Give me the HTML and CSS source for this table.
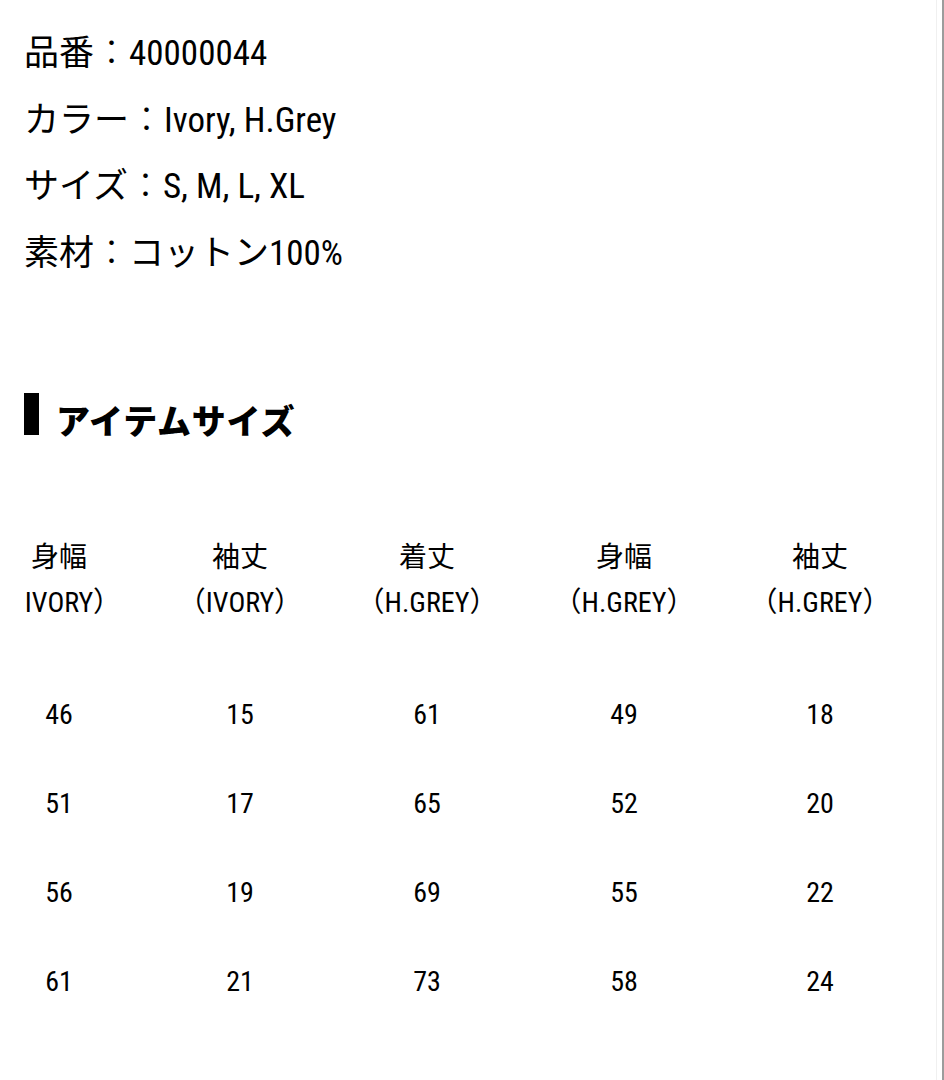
FILE: index.html
```html
<!DOCTYPE html>
<html lang="ja">
<head>
<meta charset="utf-8">
<title>アイテムサイズ</title>
<link rel="stylesheet" href="styles.css">
</head>
<body>
<div class="page">
  <div class="info">
    <p>品番<span class="sep">：</span>40000044</p>
    <p>カラー<span class="sep">：</span>Ivory, H.Grey</p>
    <p>サイズ<span class="sep">：</span>S, M, L, XL</p>
    <p>素材<span class="sep">：</span>コットン100%</p>
  </div>
  <h2 class="heading"><span class="heading-text">アイテムサイズ</span></h2>
  <div class="table-scroll">
    <table class="size-table">
      <colgroup>
        <col class="c1"><col class="c2"><col class="c3"><col class="c4"><col class="c5">
      </colgroup>
      <thead>
        <tr>
          <th>身幅<br>（IVORY）</th>
          <th>袖丈<br>（IVORY）</th>
          <th>着丈<br>（H.GREY）</th>
          <th>身幅<br>（H.GREY）</th>
          <th>袖丈<br>（H.GREY）</th>
        </tr>
      </thead>
      <tbody>
        <tr><td>46</td><td>15</td><td>61</td><td>49</td><td>18</td></tr>
        <tr><td>51</td><td>17</td><td>65</td><td>52</td><td>20</td></tr>
        <tr><td>56</td><td>19</td><td>69</td><td>55</td><td>22</td></tr>
        <tr><td>61</td><td>21</td><td>73</td><td>58</td><td>24</td></tr>
      </tbody>
    </table>
  </div>
</div>
<div class="edge"></div>
</body>
</html>
```

FILE: styles.css
```css
html, body {
  margin: 0;
  padding: 0;
  background: #fff;
}

body {
  display: flex;
  min-height: 1080px;
  color: #000;
  font-family: "Roboto Condensed", "Roboto", "Noto Sans CJK JP", sans-serif;
  font-stretch: 87.5%;
}

.page {
  flex: 1;
  min-width: 0;
  box-sizing: border-box;
  padding: 21px 24px 0;
}

.edge {
  width: 8px;
  box-sizing: border-box;
  border-left: 1px solid #f0f0f0;
  border-right: 2px solid #9c9c9c;
}

.info p {
  margin: 0;
  font-size: 35px;
  line-height: 66.5px;
}

.sep {
  font-weight: 300;
  line-height: 0;
}

.heading {
  margin: 106px 0 0;
  display: flex;
  align-items: flex-start;
  height: 42px;
  font-family: "Noto Sans CJK JP", sans-serif;
  font-size: 34px;
  font-weight: 900;
  line-height: 34px;
}

.heading::before {
  content: "";
  flex: none;
  width: 15px;
  height: 42px;
  margin-right: 17px;
  background: #000;
}

.heading-text {
  margin-top: 10px;
  letter-spacing: 0.8px;
}

.table-scroll {
  margin-top: 79px;
  overflow: hidden;
}

.size-table {
  margin-left: -56px;
  border-collapse: collapse;
  table-layout: fixed;
  width: 948px;
  font-size: 28px;
  line-height: 44.8px;
}

.c1 { width: 182px; }
.c2 { width: 180px; }
.c3 { width: 194px; }
.c4 { width: 200px; }
.c5 { width: 192px; }

.size-table th,
.size-table td {
  padding: 22.2px 0;
  text-align: center;
  white-space: nowrap;
}

.size-table th {
  font-weight: 400;
  padding-bottom: 45px;
}
```
